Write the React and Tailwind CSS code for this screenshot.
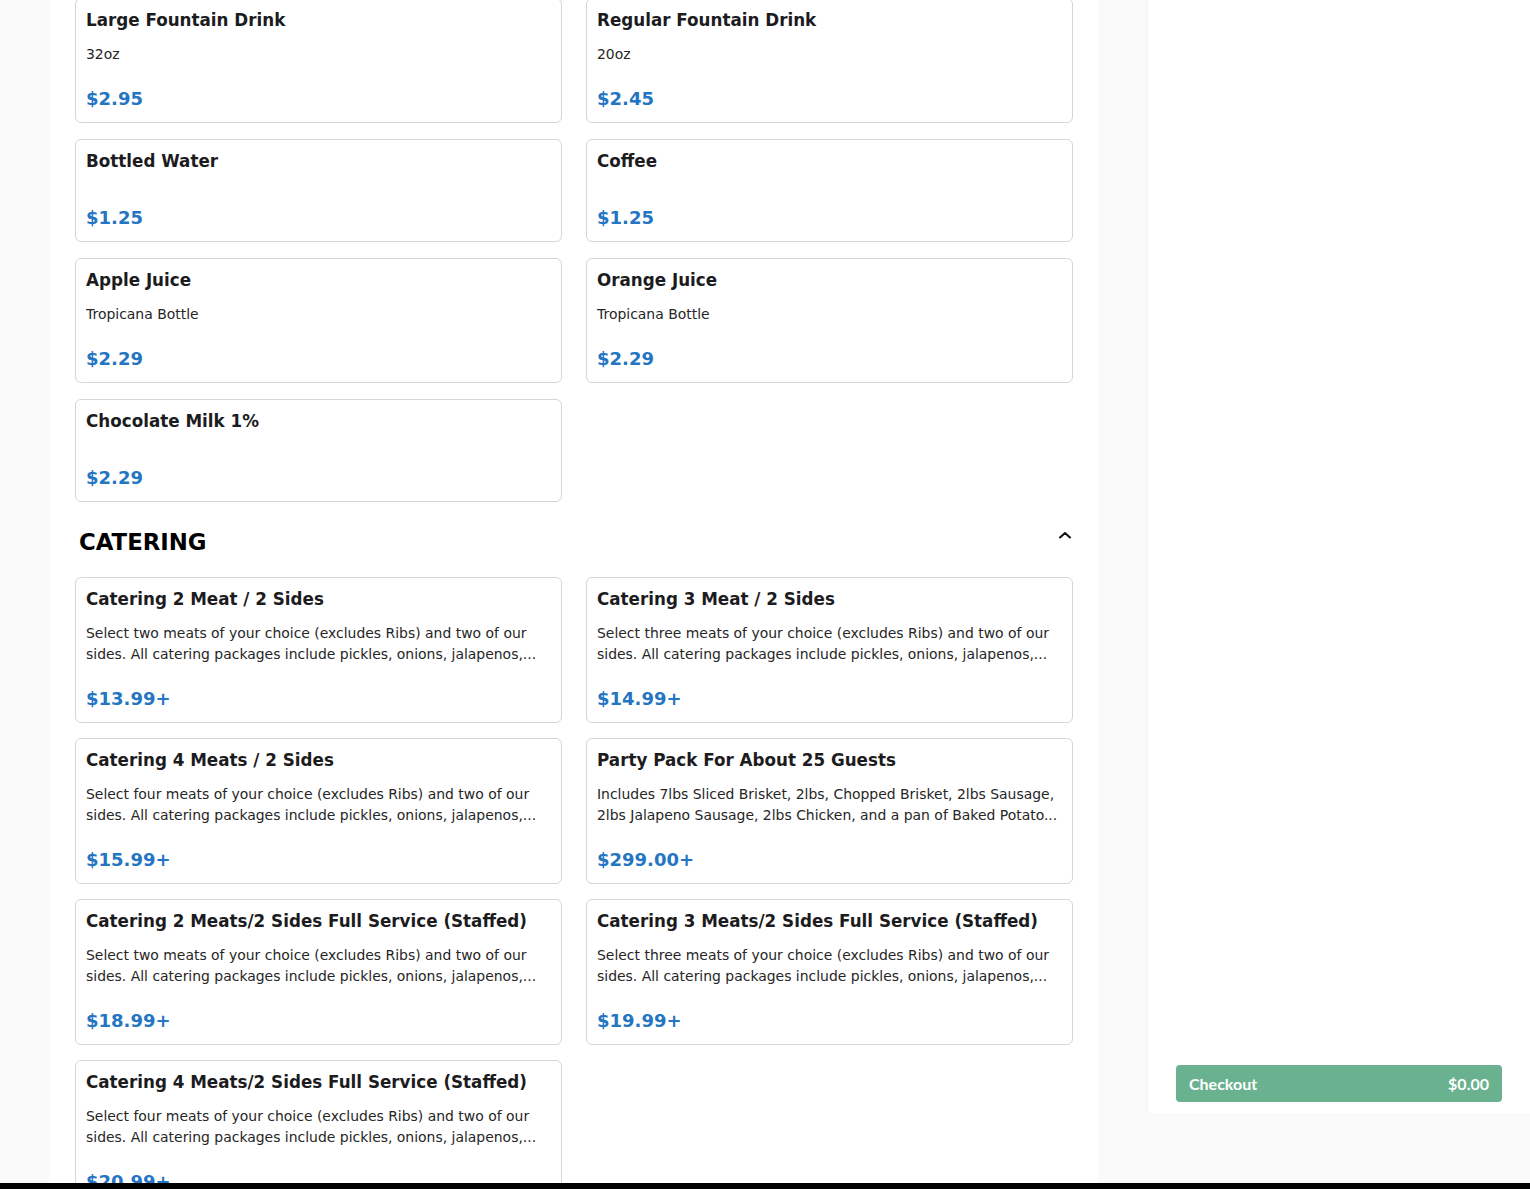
const drinks = [
  { name: 'Large Fountain Drink', desc: '32oz', price: '$2.95' },
  { name: 'Regular Fountain Drink', desc: '20oz', price: '$2.45' },
  { name: 'Bottled Water', price: '$1.25' },
  { name: 'Coffee', price: '$1.25' },
  { name: 'Apple Juice', desc: 'Tropicana Bottle', price: '$2.29' },
  { name: 'Orange Juice', desc: 'Tropicana Bottle', price: '$2.29' },
  { name: 'Chocolate Milk 1%', price: '$2.29' },
]

const cateringDesc = (n) =>
  `Select ${n} meats of your choice (excludes Ribs) and two of our sides. All catering packages include pickles, onions, jalapenos,...`

const catering = [
  { name: 'Catering 2 Meat / 2 Sides', desc: cateringDesc('two'), price: '$13.99+' },
  { name: 'Catering 3 Meat / 2 Sides', desc: cateringDesc('three'), price: '$14.99+' },
  { name: 'Catering 4 Meats / 2 Sides', desc: cateringDesc('four'), price: '$15.99+' },
  {
    name: 'Party Pack For About 25 Guests',
    desc: 'Includes 7lbs Sliced Brisket, 2lbs, Chopped Brisket, 2lbs Sausage, 2lbs Jalapeno Sausage, 2lbs Chicken, and a pan of Baked Potato...',
    price: '$299.00+',
  },
  { name: 'Catering 2 Meats/2 Sides Full Service (Staffed)', desc: cateringDesc('two'), price: '$18.99+' },
  { name: 'Catering 3 Meats/2 Sides Full Service (Staffed)', desc: cateringDesc('three'), price: '$19.99+' },
  { name: 'Catering 4 Meats/2 Sides Full Service (Staffed)', desc: cateringDesc('four'), price: '$20.99+' },
]

function ItemCard({ item }) {
  return (
    <div className="rounded-md border border-[#d6d6d6] bg-white px-[10px] pt-[9px] pb-[11px]">
      <h3 className="text-[16.75px] leading-[24px] font-bold text-[#1c1c1e]">{item.name}</h3>
      {item.desc && (
        <p className="mt-[12px] line-clamp-2 text-[13.95px] leading-[21px] text-[#262626]">
          {item.desc}
        </p>
      )}
      <p
        className={
          item.desc
            ? 'mt-[22px] text-[18px] leading-[24px] font-bold text-[#2475c2]'
            : 'mt-[33px] text-[18px] leading-[24px] font-bold text-[#2475c2]'
        }
      >
        {item.price}
      </p>
    </div>
  )
}

export default function App() {
  return (
    <div className="flex h-[1189px] flex-col overflow-hidden bg-[#fafafa] font-['DejaVu_Sans',sans-serif]">
      <div className="flex min-h-0 flex-1">
        <main className="ml-[50px] w-[1048px] shrink-0 bg-white px-[25px]">
          <div className="-mt-[2px] grid grid-cols-2 gap-x-6 gap-y-4">
            {drinks.map((item) => (
              <ItemCard key={item.name} item={item} />
            ))}
          </div>

          <div className="mt-[25px] mb-[20px] flex items-start justify-between pl-1 pr-[1px]">
            <h2 className="text-[22.8px] leading-[30px] font-bold text-black">CATERING</h2>
            <svg
              width="14"
              height="10"
              viewBox="0 0 14 10"
              className="mt-[3px]"
              fill="none"
              stroke="#111"
              strokeWidth="2"
              strokeLinecap="round"
              strokeLinejoin="round"
            >
              <path d="M2 7.5 7 3l5 4.5" />
            </svg>
          </div>

          <div className="grid grid-cols-2 gap-x-6 gap-y-[15px]">
            {catering.map((item) => (
              <ItemCard key={item.name} item={item} />
            ))}
          </div>
        </main>

        <aside className="ml-[49px] flex h-[1113px] w-[383px] shrink-0 flex-col justify-end border-l border-[#f3f3f3] bg-white pr-[28px] pb-[11px] pl-[28px]">
          <button className="flex h-[37px] w-full items-center justify-between rounded-[4px] bg-[#6ab190] px-[13px] font-['Lato',sans-serif] text-[16px] font-bold text-white">
            <span>Checkout</span>
            <span>$0.00</span>
          </button>
        </aside>
      </div>
      <div className="h-[6px] shrink-0 bg-black" />
    </div>
  )
}
